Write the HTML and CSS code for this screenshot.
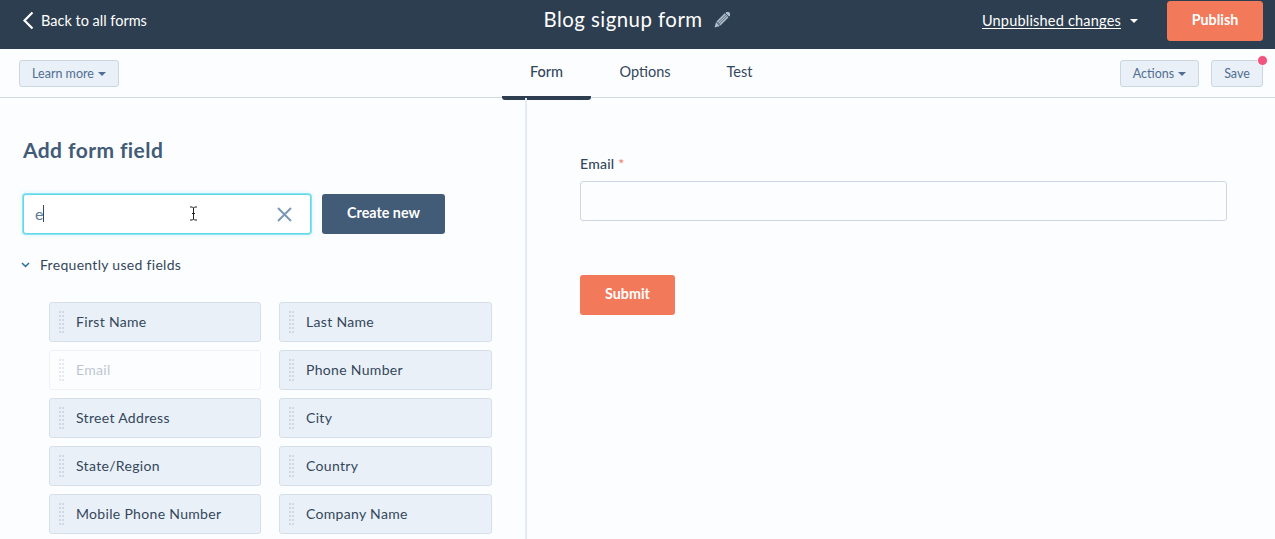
FILE: index.html
```html
<!DOCTYPE html>
<html lang="en">
<head>
<meta charset="utf-8">
<title>Blog signup form</title>
<link rel="stylesheet" href="styles.css">
</head>
<body>
<header class="topbar">
  <a class="back"><svg class="back-icon" width="12" height="19" viewBox="0 0 12 19"><path d="M10.500 1.500 2.500 9.500l8 8" fill="none" stroke="#fff" stroke-width="2.200"/></svg>Back to all forms</a>
  <div class="title"><span class="title-text">Blog signup form</span>
    <svg class="pencil" width="16" height="16" viewBox="0 0 16 16"><g transform="rotate(45 8 8)" fill="#aebccb"><rect x="5.200" y="-2.500" width="5.600" height="3.200" rx="1.400"/><rect x="5.200" y="1.400" width="5.600" height="11.600"/><path d="M5.200 13.700h5.600L8 18.500Z"/><path d="M7.100 1.400v11.600M8.900 1.400v11.600" stroke="#2d3e50" stroke-width=".6"/></g></svg>
  </div>
  <div class="top-actions">
    <a class="unpublished"><span class="unpublished-text">Unpublished changes</span><i class="caret caret-white"></i></a>
    <button class="publish">Publish</button>
  </div>
</header>
<nav class="subbar">
  <div class="sub-left"><button class="btn-sec learn">Learn more<i class="caret caret-blue"></i></button></div>
  <div class="tabs">
    <a class="tab tab-form active">Form</a>
    <a class="tab tab-options">Options</a>
    <a class="tab tab-test">Test</a>
  </div>
  <div class="sub-right">
    <button class="btn-sec actions">Actions<i class="caret caret-blue"></i></button>
    <button class="btn-sec save">Save<i class="dot"></i></button>
  </div>
</nav>
<main class="main">
  <section class="left">
    <h2>Add form field</h2>
    <div class="search-row">
      <div class="search">
        <span class="search-val">e</span><span class="cursor"></span>
        <svg class="ibeam" width="9" height="15" viewBox="0 0 9 15"><path d="M1 1h2.500l1 1 1-1H8M4.500 2v11M1 14h2.500l1-1 1 1H8M3 7.500h3" fill="none" stroke="#222" stroke-width="1"/></svg>
        <svg class="clear" width="15" height="15" viewBox="0 0 15 15"><path d="M1 1l13 13M14 1 1 14" fill="none" stroke="#7c98b6" stroke-width="2"/></svg>
      </div>
      <button class="create">Create new</button>
    </div>
    <div class="section-head">
      <svg width="9" height="6" viewBox="0 0 9 6"><path d="M1 1l3.500 3.500L8 1" fill="none" stroke="#2a6f9c" stroke-width="1.500"/></svg>
      <span>Frequently used fields</span>
    </div>
    <div class="fields">
      <div class="field"><i class="grip"></i>First Name</div>
      <div class="field"><i class="grip"></i>Last Name</div>
      <div class="field off"><i class="grip"></i>Email</div>
      <div class="field"><i class="grip"></i>Phone Number</div>
      <div class="field"><i class="grip"></i>Street Address</div>
      <div class="field"><i class="grip"></i>City</div>
      <div class="field"><i class="grip"></i>State/Region</div>
      <div class="field"><i class="grip"></i>Country</div>
      <div class="field"><i class="grip"></i>Mobile Phone Number</div>
      <div class="field"><i class="grip"></i>Company Name</div>
    </div>
  </section>
  <section class="right">
    <label class="form-label">Email <span class="req">*</span></label>
    <div class="form-input"></div>
    <button class="submit">Submit</button>
  </section>
</main>
</body>
</html>
```
FILE: styles.css
```css
* { box-sizing: border-box; }
html, body { margin: 0; height: 539px; overflow: hidden; }
body { font-family: Lato, "Open Sans", sans-serif; background: #fcfdff; color: #33475b; font-size: 14px; }
button { font-family: inherit; cursor: pointer; }

.topbar { height: 49px; background: #2d3e50; color: #fff; display: grid; grid-template-columns: 1fr auto 1fr; align-items: center; padding: 0 12px 8px; }
.back { display: flex; align-items: center; gap: 7px; font-size: 14.500px; justify-self: start; margin-left: 10px; }
.title { display: flex; align-items: center; gap: 13px; font-size: 20.400px; letter-spacing: .48px; }
.title-text { margin-top: -4px; }
.pencil { margin: -1px 2px 0 -2px; }
.top-actions { display: flex; align-items: center; justify-self: end; }
.unpublished { display: flex; align-items: center; font-size: 14.500px; margin-right: 29px; margin-left: -1px; }
.unpublished-text { border-bottom: 1px solid #fff; line-height: 15px; letter-spacing: .2px; }
.publish { width: 96px; height: 40px; background: #f2795a; color: #fff; border: 1px solid #f2795a; border-radius: 3px; font-size: 14.300px; font-weight: 700; padding: 0 0 2px; }

.caret { display: inline-block; width: 0; height: 0; border-left: 4px solid transparent; border-right: 4px solid transparent; margin-left: 4px; }
.caret-white { border-top: 4px solid #fff; margin-left: 9px; }
.caret-blue { border-top: 4px solid #506e91; vertical-align: 2px; }

.subbar { height: 49px; border-bottom: 1px solid #d3d9e3; display: grid; grid-template-columns: 1fr auto 1fr; padding: 11px 12px 0 19px; }
.sub-left { justify-self: start; }
.sub-right { justify-self: end; display: flex; gap: 12px; }
.btn-sec { height: 27px; background: #eaf0f8; border: 1px solid #cbd6e2; border-radius: 3px; color: #506e91; font-size: 12.500px; padding: 0; position: relative; }
.learn { width: 100px; }
.actions { width: 79px; }
.save { width: 52px; }
.dot { position: absolute; top: -6px; right: -6px; width: 11px; height: 11px; border-radius: 50%; background: #f2547d; border: 1.500px solid #fcfdff; }

.tabs { display: flex; margin-top: -11px; height: 51px; }
.tab { display: flex; align-items: center; justify-content: center; padding-bottom: 2px; font-size: 14.500px; width: 89px; border-bottom: 4px solid transparent; border-radius: 0 0 3px 3px; }
.tab-options { width: 108px; }
.tab-test { width: 81px; }
.tab.active { border-bottom-color: #2d3e50; font-weight: 500; }

.main { display: flex; height: 441px; }
.left { width: 527px; border-right: 2px solid #e5ebf3; padding: 40px 33px 0 23px; flex: none; }
h2 { margin: 0 0 32px; font-size: 21px; line-height: 24px; font-weight: 700; color: #425b76; letter-spacing: .42px; }
.search-row { display: flex; gap: 11px; }
.search { width: 288px; height: 40px; border: 1px solid #62d8ea; border-radius: 3px; display: flex; align-items: center; padding: 0 0 1px 11px; background: #fff; box-shadow: 0 0 0 1px rgba(98,216,234,.7), 0 0 4px 1px rgba(98,216,234,.25); position: relative; }
.search-val { color: #5f7b99; font-size: 16px; }
.cursor { width: 1px; height: 17px; background: #33475b; }
.ibeam { position: absolute; left: 165px; top: 11px; }
.clear { position: absolute; right: 18px; top: 12px; }
.create { width: 123px; height: 40px; background: #425b76; color: #fff; border: 0; border-radius: 3px; font-size: 14.300px; font-weight: 700; padding: 0 0 3px; }
.section-head { display: flex; align-items: center; gap: 10px; margin: 21px 0 27px -2px; font-size: 14px; line-height: 20px; letter-spacing: .3px; color: #33475b; }
.fields { display: grid; grid-template-columns: 212px 213px; column-gap: 18px; row-gap: 8px; margin-left: 26px; }
.field { height: 40px; background: #eaf0f8; border: 1px solid #d6dfea; border-radius: 3px; display: flex; align-items: center; padding: 0 0 2px 26px; position: relative; font-size: 14px; letter-spacing: .32px; }
.grip { position: absolute; left: 9px; top: 8px; width: 6px; height: 24px; background: repeating-linear-gradient(to bottom, #d0d9e4 0 2px, transparent 2px 4px); -webkit-mask-image: repeating-linear-gradient(to right, #000 0 2px, transparent 2px 3px); mask-image: repeating-linear-gradient(to right, #000 0 2px, transparent 2px 3px); }
.field.off { background: #fcfdff; border-color: #eef1f6; color: #bcc6d2; }
.field.off .grip { opacity: .55; }

.right { flex: 1; padding: 56px 48px 0 53px; }
.form-label { display: block; font-size: 14px; line-height: 20px; font-weight: 500; letter-spacing: .25px; margin-bottom: 7px; }
.req { color: #f2795a; }
.form-input { height: 40px; border: 1px solid #cbd6e2; border-radius: 3px; background: #fcfdff; margin-bottom: 54px; }
.submit { width: 95px; height: 40px; background: #f2795a; color: #fff; border: 0; border-radius: 3px; font-size: 14.300px; font-weight: 700; padding: 0 0 3px; }
```
